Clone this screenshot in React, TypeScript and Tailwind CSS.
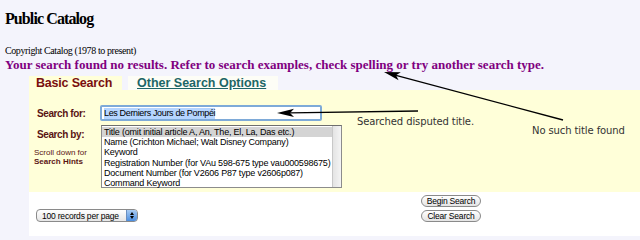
import React from 'react';

const serif = "font-['Liberation_Serif',_'Times_New_Roman',serif]";
const sans = "font-['Liberation_Sans',Arial,sans-serif]";

const searchTypes = [
  'Title (omit initial article A, An, The, El, La, Das etc.)',
  'Name (Crichton Michael; Walt Disney Company)',
  'Keyword',
  'Registration Number (for VAu 598-675 type vau000598675)',
  'Document Number (for V2606 P87 type v2606p087)',
  'Command Keyword',
];

const Annotations: React.FC = () => (
  <>
    <svg className="absolute inset-0 pointer-events-none" width="640" height="240" viewBox="0 0 640 240">
      {/* arrow to the search box */}
      <line x1="418" y1="111" x2="290" y2="112.8" stroke="#000" strokeWidth="1.3" />
      <polygon points="277,113 294,108.8 290,112.9 294,117" fill="#000" />
      {/* arrow to the "no results" message */}
      <line x1="563" y1="120" x2="396" y2="75.3" stroke="#000" strokeWidth="1.3" />
      <polygon points="384,72 400.8,72.2 396,75.3 398.6,80.2" fill="#000" />
    </svg>
    <span className="absolute left-[357px] top-[116px] text-[10px] leading-[12px] text-[#333] font-['DejaVu_Sans',Verdana,sans-serif] tracking-[-0.1px]">
      Searched disputed title.
    </span>
    <span className="absolute left-[532px] top-[125px] text-[10px] leading-[12px] text-[#333] font-['DejaVu_Sans',Verdana,sans-serif] tracking-[-0.1px]">
      No such title found
    </span>
  </>
);

const App: React.FC = () => {
  return (
    <div className={`relative w-[640px] h-[240px] overflow-hidden bg-[#f4f4fc] ${serif}`}>
      {/* Page header */}
      <h1 className="pl-[5px] pt-[10px] text-[16px] leading-[18px] font-bold tracking-[-0.9px] text-black">
        Public Catalog
      </h1>
      <p className="pl-[5px] mt-[17px] text-[10px] leading-[12px] tracking-[-0.4px] text-black">
        Copyright Catalog (1978 to present)
      </p>
      <p className="pl-[5px] mt-[1px] text-[13px] leading-[14px] font-bold text-[#800080]">
        Your search found no results. Refer to search examples, check spelling or try another search type.
      </p>

      <div className="ml-[29px] mt-[4px]">
        {/* Tabs */}
        <div className={`flex items-end h-[14px] ${sans} font-bold text-[12.5px] leading-[14px]`}>
          <div className="w-[93px] h-[14px] bg-[#ffffd9] pl-[7px] text-[#7a0f0f] tracking-[-0.2px]">Basic Search</div>
          <div className="ml-[6px] w-[150px] h-[14px] bg-[#fdfdf6] pl-[9px] text-[#1d6666] underline">
            Other Search Options
          </div>
        </div>

        {/* Search panel */}
        <div className={`bg-[#ffffd9] h-[102px] pt-[15px] ${sans}`}>
          <div className="flex items-center h-[16px]">
            <div className="w-[71px] pl-[8px] text-[10px] font-bold text-[#5a1414] tracking-[-0.4px]">Search for:</div>
            <div className="w-[222px] h-[16px] rounded-[2px] border-2 border-[#7eaad8] bg-white flex items-center pl-[2px]">
              <span className="bg-[#b5d5ff] text-[9px] leading-[11px] tracking-[-0.35px] text-black">Les Derniers Jours de Pompéi</span>
            </div>
          </div>
          <div className="flex mt-[4px]">
            <div className="w-[72px] pl-[8px]">
              <div className="text-[10px] font-bold text-[#5a1414] mt-[2px] tracking-[-0.4px]">Search by:</div>
              <div className="mt-[6px] -ml-[3px] text-[8px] leading-[9px] text-[#5a1414]">
                <div>Scroll down for</div>
                <div className="font-bold">Search Hints</div>
              </div>
            </div>
            <div className="w-[241px] h-[63px] border border-[#8c8c8c] border-t-[#6e6e6e] bg-white flex">
              <ul className="flex-1 pt-[1px] text-[9px] leading-[10.2px] tracking-[-0.2px] text-black">
                {searchTypes.map((t, i) => (
                  <li key={t} className={`pl-[2px] whitespace-nowrap ${i === 0 ? 'bg-[#d4d4d4]' : ''}`}>
                    {t}
                  </li>
                ))}
              </ul>
              <div className="w-[9px] border-l border-[#c8c8c8] bg-gradient-to-r from-[#e4e4e4] to-[#f4f4f4]" />
            </div>
          </div>
        </div>

        {/* Bottom controls */}
        <div className={`bg-white h-[44px] flex ${sans}`}>
          <div className="w-[392px] pl-[7px] pt-[17px]">
            <div className="w-[102px] h-[13px] rounded-[4px] border border-[#8a8a8a] bg-gradient-to-b from-white to-[#e6e6e6] flex items-center overflow-hidden">
              <span className="flex-1 pl-[5px] text-[8.5px] leading-[10px] tracking-[-0.2px] text-black">100 records per page</span>
              <span className="w-[11px] h-full bg-gradient-to-b from-[#a9cbf2] to-[#4a8ee0] flex flex-col items-center justify-center gap-[1px] border-l border-[#6b8fbf]">
                <span className="w-0 h-0 border-l-[2.5px] border-r-[2.5px] border-b-[3px] border-l-transparent border-r-transparent border-b-black" />
                <span className="w-0 h-0 border-l-[2.5px] border-r-[2.5px] border-t-[3px] border-l-transparent border-r-transparent border-t-black" />
              </span>
            </div>
          </div>
          <div className="flex flex-col gap-[3px] pt-[3px]">
            <button className="w-[60px] h-[12px] rounded-full border border-[#8a8a8a] bg-gradient-to-b from-white to-[#e4e4e4] text-[8.5px] leading-[10px] tracking-[-0.2px] text-black">
              Begin Search
            </button>
            <button className="w-[60px] h-[12px] rounded-full border border-[#8a8a8a] bg-gradient-to-b from-white to-[#e4e4e4] text-[8.5px] leading-[10px] tracking-[-0.2px] text-black">
              Clear Search
            </button>
          </div>
        </div>
      </div>

      <Annotations />
    </div>
  );
};

export default App;
